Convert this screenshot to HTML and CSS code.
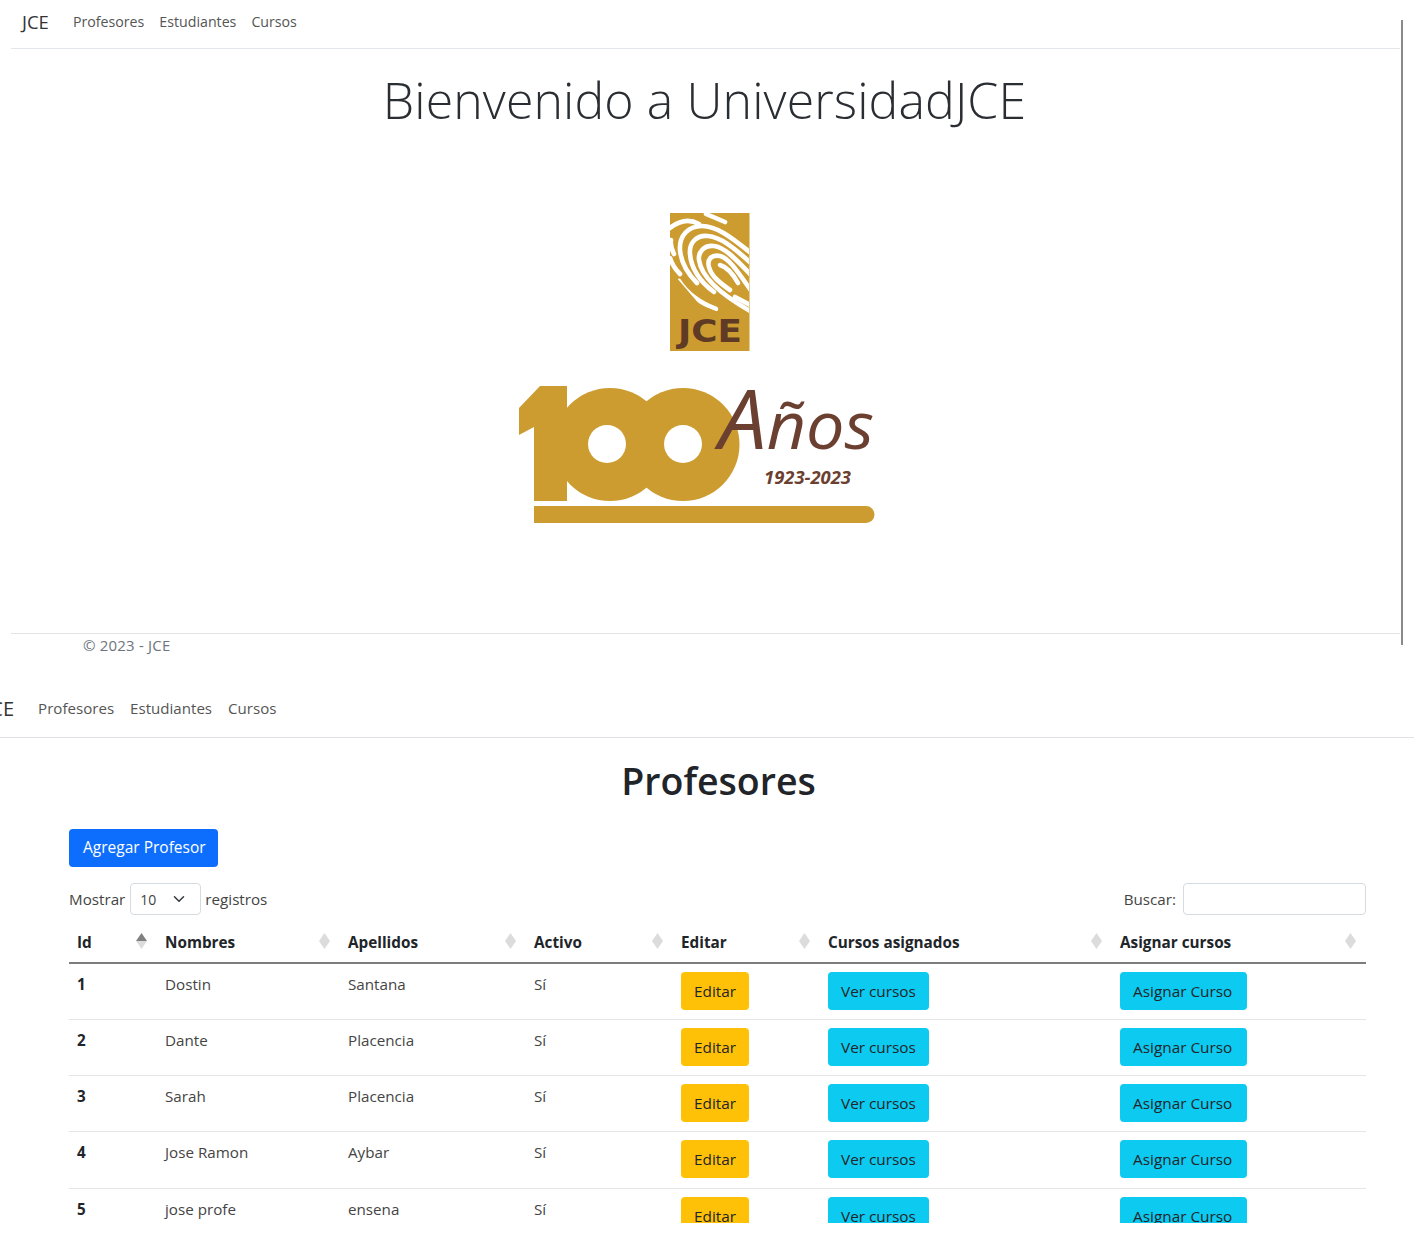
FILE: index.html
```html
<!DOCTYPE html>
<html>
<head>
    <title>UniversidadJCE</title>
    <link rel="stylesheet" href="styles.css">
</head>
<body>
    <section class="home">
        <nav class="navbar">
            <a class="brand" href="#">JCE</a>
            <a class="nav-link" href="#">Profesores</a>
            <a class="nav-link" href="#">Estudiantes</a>
            <a class="nav-link" href="#">Cursos</a>
        </nav>
        <h1 class="welcome">Bienvenido a UniversidadJCE</h1>
        <div class="logo-wrap">
            <svg class="logo" viewBox="519 213 366 311" width="366" height="311" role="img" aria-label="JCE 100 Años">
                <defs>
                    <clipPath id="printClip">
                        <polygon points="670,213 749,213 749,322 716,311 700,305 670,270"/>
                    </clipPath>
                    <mask id="zeroHoles">
                        <rect x="519" y="213" width="366" height="311" fill="#fff"/>
                        <circle cx="607" cy="444" r="19" fill="#000"/>
                        <circle cx="683" cy="444" r="19" fill="#000"/>
                    </mask>
                </defs>
                <rect x="670" y="213" width="79.5" height="138" fill="#cc9c30"/>
                <g clip-path="url(#printClip)" fill="none" stroke="#fff" stroke-width="4.6" stroke-linecap="round">
                    <path d="M670 228 C680 220 690 219 699 224"/>
                    <path d="M706 214 L725 222"/>
                    <path d="M671 240 C670 246 672 250 674 254"/>
                    <path d="M752 254 C730 236 716 226 702 226 C688 226 679 236 680 250 C681 262 688 274 697 283"/>
                    <path d="M752 264 C732 246 720 237 708 236 C696 235 689 243 690 254 C691 268 700 282 714 292"/>
                    <path d="M752 276 C735 258 724 247 714 246 C704 245 698 252 699 260 C701 274 716 292 752 312"/>
                    <path d="M752 292 C738 272 729 258 720 256 C711 254 707 260 709 267 C711 276 720 283 730 290"/>
                    <path d="M720 265 C727 267 733 274 738 283"/>
                    <path d="M670 258 C672 265 676 270 680 274"/>
                    <path d="M679 281 C686 292 698 302 716 309"/>
                    <path d="M735 297 L752 306"/>
                </g>
                <text class="logo-jce" x="678" y="342" textLength="64" lengthAdjust="spacingAndGlyphs">JCE</text>
                <g fill="#cc9c30" mask="url(#zeroHoles)">
                    <polygon points="519,408 540,386 567,386 567,501 534,501 534,427 519,435"/>
                    <circle cx="610" cy="444.5" r="56.5"/>
                    <circle cx="683" cy="444.5" r="56.5"/>
                </g>
                <path d="M534 506 H866 A8.5 8.5 0 0 1 866 523 H534 Z" fill="#cc9c30"/>
                <text class="logo-anos" x="719" y="449" textLength="155" lengthAdjust="spacingAndGlyphs"><tspan class="logo-anos-cap">A</tspan>ños</text>
                <text class="logo-years" x="764" y="484" textLength="87" lengthAdjust="spacingAndGlyphs">1923-2023</text>
            </svg>
        </div>
        <footer class="footer">© 2023 - JCE</footer>
    </section>

    <section class="teachers">
        <nav class="navbar navbar-lg">
            <a class="brand" href="#">JCE</a>
            <a class="nav-link" href="#">Profesores</a>
            <a class="nav-link" href="#">Estudiantes</a>
            <a class="nav-link" href="#">Cursos</a>
        </nav>
        <h1 class="page-title">Profesores</h1>
        <div class="content">
            <a class="btn btn-primary add-btn" href="#">Agregar Profesor</a>
            <div class="table-controls">
                <label class="control">Mostrar
                    <span class="select-box">10
                        <svg width="12" height="12" viewBox="0 0 16 16"><path d="M2 5l6 6 6-6" fill="none" stroke="#343a40" stroke-width="2" stroke-linecap="round" stroke-linejoin="round"/></svg>
                    </span>
                    registros</label>
                <label class="control">Buscar: <input class="search" type="text"></label>
            </div>
            <table class="data-table">
                <thead>
                    <tr>
                        <th class="col-id sort-asc">Id</th>
                        <th class="col-name">Nombres</th>
                        <th class="col-last">Apellidos</th>
                        <th class="col-active">Activo</th>
                        <th class="col-edit">Editar</th>
                        <th class="col-courses">Cursos asignados</th>
                        <th class="col-assign">Asignar cursos</th>
                    </tr>
                </thead>
                <tbody>
                    <tr>
                        <td class="cell-id">1</td><td>Dostin</td><td>Santana</td><td>Sí</td>
                        <td><a class="btn btn-warning" href="#">Editar</a></td>
                        <td><a class="btn btn-info" href="#">Ver cursos</a></td>
                        <td><a class="btn btn-info btn-assign" href="#">Asignar Curso</a></td>
                    </tr>
                    <tr>
                        <td class="cell-id">2</td><td>Dante</td><td>Placencia</td><td>Sí</td>
                        <td><a class="btn btn-warning" href="#">Editar</a></td>
                        <td><a class="btn btn-info" href="#">Ver cursos</a></td>
                        <td><a class="btn btn-info btn-assign" href="#">Asignar Curso</a></td>
                    </tr>
                    <tr>
                        <td class="cell-id">3</td><td>Sarah</td><td>Placencia</td><td>Sí</td>
                        <td><a class="btn btn-warning" href="#">Editar</a></td>
                        <td><a class="btn btn-info" href="#">Ver cursos</a></td>
                        <td><a class="btn btn-info btn-assign" href="#">Asignar Curso</a></td>
                    </tr>
                    <tr>
                        <td class="cell-id">4</td><td>Jose Ramon</td><td>Aybar</td><td>Sí</td>
                        <td><a class="btn btn-warning" href="#">Editar</a></td>
                        <td><a class="btn btn-info" href="#">Ver cursos</a></td>
                        <td><a class="btn btn-info btn-assign" href="#">Asignar Curso</a></td>
                    </tr>
                    <tr>
                        <td class="cell-id">5</td><td>jose profe</td><td>ensena</td><td>Sí</td>
                        <td><a class="btn btn-warning" href="#">Editar</a></td>
                        <td><a class="btn btn-info" href="#">Ver cursos</a></td>
                        <td><a class="btn btn-info btn-assign" href="#">Asignar Curso</a></td>
                    </tr>
                </tbody>
            </table>
        </div>
    </section>
</body>
</html>
```
FILE: styles.css
```css
* {
    box-sizing: border-box;
}

html, body {
    margin: 0;
    height: 1255px;
    overflow: hidden;
    background-color: #fff;
}

body {
    font-family: "Open Sans", "Noto Sans", sans-serif;
    color: #212529;
    font-size: 15.2px;
}

a {
    text-decoration: none;
}

/* first capture: home page */
.home {
    position: relative;
    height: 681px;
    margin: 0 14px 0 11px;
}

.home::after {
    content: "";
    position: absolute;
    top: 20px;
    right: -3px;
    width: 2px;
    height: 625px;
    background-color: #8a8a8a;
}

.navbar {
    display: flex;
    align-items: center;
    height: 49px;
    padding: 0 0 6px 11px;
    border-bottom: 1px solid #e3e7eb;
}

.brand {
    color: #333;
    font-size: 18.5px;
    margin-right: 24px;
}

.nav-link {
    color: #555;
    font-size: 14.2px;
    margin-right: 15px;
}

.welcome {
    margin: 0;
    padding: 14px 2px 0 0;
    height: 164px;
    text-align: center;
    font-size: 50px;
    font-weight: 300;
    line-height: 74px;
    color: #2a2e33;
    letter-spacing: 0.1px;
}

.logo-wrap {
    display: flex;
    justify-content: flex-start;
    height: 420px;
    padding-left: 508px;
}

.logo {
    display: block;
}

.logo-jce {
    font-family: "DejaVu Sans", sans-serif;
    font-weight: bold;
    font-size: 32px;
    fill: #5f3b25;
}

.logo-anos {
    font-family: "Open Sans", sans-serif;
    font-style: italic;
    font-weight: 400;
    font-size: 66px;
    fill: #6b4030;
}

.logo-anos-cap {
    font-size: 82px;
}

.logo-years {
    font-family: "Open Sans", sans-serif;
    font-style: italic;
    font-weight: 700;
    font-size: 17px;
    fill: #6b4030;
}

.footer {
    border-top: 1px solid #e1e3e6;
    padding: 1px 0 0 72px;
    font-size: 15px;
    letter-spacing: 0.2px;
    color: #6c757d;
}

/* second capture: teachers table */
.teachers {
    height: 542px;
    overflow: hidden;
}

.navbar-lg {
    height: 57px;
    padding: 0 0 2px;
    border-bottom-color: #dfe2e6;
}

.navbar-lg .brand {
    font-size: 20px;
    margin-left: -15px;
    margin-right: 24px;
}

.navbar-lg .nav-link {
    font-size: 15.1px;
    margin-right: 16px;
}

.page-title {
    margin: 0;
    padding: 18px 0 0 23px;
    height: 91px;
    text-align: center;
    font-size: 37.5px;
    font-weight: 600;
    line-height: 50px;
}

.content {
    margin: 0 47px 0 69px;
}

.btn {
    display: inline-block;
    height: 38px;
    padding: 0 13px;
    font-size: 15.35px;
    line-height: 38px;
    border-radius: 4px;
    white-space: nowrap;
}

.btn-primary {
    background-color: #0d6efd;
    color: #fff;
}

.btn-warning {
    background-color: #ffc107;
    color: #212529;
}

.btn-info {
    background-color: #0dcaf0;
    color: #212529;
}

.btn-assign {
    min-width: 127px;
}

.add-btn {
    display: block;
    width: 149px;
    margin-bottom: 16px;
    padding-left: 14px;
    font-size: 15.5px;
    line-height: 37px;
}

.table-controls {
    display: flex;
    justify-content: space-between;
    height: 32px;
}

.control {
    display: flex;
    align-items: center;
    gap: 5px;
    color: #444;
}

.select-box {
    display: flex;
    align-items: center;
    justify-content: space-between;
    width: 71px;
    height: 32px;
    margin-right: -1px;
    padding: 0 15px 0 9px;
    font-size: 14px;
    border: 1px solid #d6dbe0;
    border-radius: 4px;
}

.search {
    width: 183px;
    height: 32px;
    margin-left: 2px;
    margin-right: 1px;
    border: 1px solid #d6dbe0;
    border-radius: 4px;
}

.data-table {
    width: 1297px;
    margin-top: 0;
    border-collapse: collapse;
    table-layout: fixed;
}

.data-table th {
    position: relative;
    height: 48px;
    padding: 6px 8px 0;
    text-align: left;
    font-size: 15.3px;
    font-weight: 700;
    border-bottom: 2px solid #7d7d7d;
}

/* datatables style sort arrows */
.data-table th::before,
.data-table th::after {
    content: "";
    position: absolute;
    right: 10px;
    width: 11px;
    height: 8px;
    background-color: #dcdcdc;
}

.data-table th::before {
    top: 18px;
    clip-path: polygon(50% 0, 100% 100%, 0 100%);
}

.data-table th::after {
    top: 26px;
    clip-path: polygon(0 0, 100% 0, 50% 100%);
}

.data-table th.sort-asc::before {
    background-color: #808080;
}

.col-id { width: 88px; }
.col-name { width: 183px; }
.col-last { width: 186px; }
.col-active { width: 147px; }
.col-edit { width: 147px; }
.col-courses { width: 292px; }
.col-assign { width: 254px; }

.data-table td {
    height: 56.33px;
    padding: 10px 8px 7px;
    vertical-align: top;
    color: #444;
    border-bottom: 1px solid #e4e6e8;
}

.data-table td.cell-id {
    font-weight: 700;
    color: #212529;
}

.data-table td .btn {
    display: inline-block;
    vertical-align: top;
    margin-top: -2px;
}
```
